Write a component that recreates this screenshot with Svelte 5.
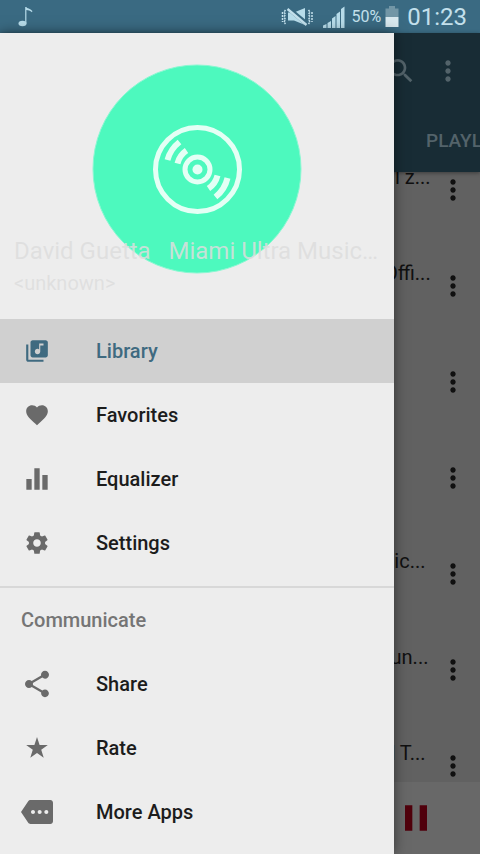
<script>
  const ICONS = {
    library: 'M20 2H8c-1.1 0-2 .9-2 2v12c0 1.1.9 2 2 2h12c1.1 0 2-.9 2-2V4c0-1.1-.9-2-2-2zm-2 5h-3v5.5c0 1.38-1.12 2.5-2.5 2.5S10 13.880 10 12.500s1.120-2.500 2.500-2.500c.57 0 1.080.19 1.500.51V5h4v2zM4 6H2v14c0 1.1.9 2 2 2h14v-2H4V6z',
    heart: 'M12 21.350l-1.450-1.320C5.400 15.360 2 12.280 2 8.500 2 5.420 4.420 3 7.500 3c1.740 0 3.410.81 4.500 2.090C13.090 3.810 14.760 3 16.500 3 19.580 3 22 5.420 22 8.500c0 3.780-3.400 6.860-8.550 11.540L12 21.350z',
    equalizer: 'M10 20h4V4h-4v16zm-6 0h4v-8H4v8zM16 9v11h4V9h-4z',
    settings: 'M19.430 12.980c.04-.32.07-.64.07-.98s-.03-.66-.07-.98l2.110-1.650c.19-.15.24-.42.12-.64l-2-3.460c-.12-.22-.39-.3-.61-.22l-2.490 1c-.52-.4-1.080-.73-1.690-.98l-.38-2.650C14.460 2.180 14.250 2 14 2h-4c-.25 0-.46.18-.49.42l-.38 2.650c-.61.25-1.170.59-1.690.98l-2.490-1c-.23-.09-.49 0-.61.22l-2 3.460c-.13.22-.07.49.12.64l2.110 1.650c-.04.32-.07.65-.07.98s.03.66.07.98l-2.110 1.650c-.19.15-.24.42-.12.64l2 3.460c.12.22.39.3.61.22l2.490-1c.52.4 1.080.73 1.690.98l.38 2.650c.03.24.24.42.49.42h4c.25 0 .46-.18.49-.42l.38-2.650c.61-.25 1.170-.59 1.690-.98l2.490 1c.23.09.49 0 .61-.22l2-3.460c.12-.22.07-.49-.12-.64l-2.110-1.650zM12 15.500c-1.930 0-3.500-1.570-3.500-3.500s1.570-3.500 3.500-3.500 3.500 1.570 3.500 3.500-1.570 3.500-3.500 3.500z',
    share: 'M18 16.080c-.76 0-1.440.3-1.960.77L8.910 12.700c.05-.23.09-.46.09-.7s-.04-.47-.09-.7l7.050-4.110c.54.5 1.250.81 2.040.81 1.660 0 3-1.340 3-3s-1.340-3-3-3-3 1.340-3 3c0 .24.04.47.09.7L8.040 9.810C7.500 9.310 6.790 9 6 9c-1.660 0-3 1.340-3 3s1.340 3 3 3c.79 0 1.500-.31 2.040-.81l7.120 4.160c-.05.21-.08.43-.08.65 0 1.610 1.310 2.920 2.920 2.920s2.920-1.310 2.920-2.920-1.310-2.920-2.920-2.920z',
    star: 'M12 1.800L14.400 9.200H22L15.900 13.700 18.200 20.900 12 16.500 5.800 20.900 8.100 13.700 2 9.200H9.600z',
    more: 'M22 3H7c-.69 0-1.230.35-1.590.88L0 12l5.410 8.110c.36.53.97.89 1.660.89H22c1.100 0 2-.9 2-2V5c0-1.100-.9-2-2-2zM9 13.500c-.83 0-1.500-.67-1.500-1.500s.67-1.500 1.500-1.500 1.500.67 1.500 1.500-.67 1.500-1.500 1.500zm5 0c-.83 0-1.500-.67-1.500-1.500s.67-1.500 1.500-1.500 1.500.67 1.500 1.500-.67 1.500-1.500 1.500zm5 0c-.83 0-1.500-.67-1.500-1.500s.67-1.500 1.500-1.500 1.500.67 1.500 1.500-.67 1.500-1.500 1.500z',
    dots: 'M12 8c1.100 0 2-.9 2-2s-.9-2-2-2-2 .9-2 2 .9 2 2 2zm0 2c-1.100 0-2 .9-2 2s.9 2 2 2 2-.9 2-2-.9-2-2-2zm0 6c-1.100 0-2 .9-2 2s.9 2 2 2 2-.9 2-2-.9-2-2-2z',
    search: 'M15.500 14h-.79l-.28-.27C15.410 12.590 16 11.110 16 9.500 16 5.910 13.090 3 9.500 3S3 5.910 3 9.500 5.910 16 9.500 16c1.610 0 3.090-.59 4.230-1.570l.27.28v.79l5 4.990L20.490 19l-4.990-5zm-6 0C7.010 14 5 11.990 5 9.500S7.010 5 9.500 5 14 7.010 14 9.500 11.990 14 9.500 14z',
    pause: 'M6 19h4V5H6v14zm8-14v14h4V5h-4z'
  };

  const library = [
    { label: 'Library', icon: 'library', active: true },
    { label: 'Favorites', icon: 'heart' },
    { label: 'Equalizer', icon: 'equalizer', large: true },
    { label: 'Settings', icon: 'settings' }
  ];
  const communicate = [
    { label: 'Share', icon: 'share', large: true },
    { label: 'Rate', icon: 'star' },
    { label: 'More Apps', icon: 'more', large: true }
  ];
  const songs = ['al z...', 'Offi...', '', '', 'sic...', 'tun...', 'd T...'];
</script>

{#snippet icon(name, large)}
  <svg class="icon" class:large viewBox="0 0 24 24" aria-hidden="true"><path fill-rule="evenodd" d={ICONS[name]} /></svg>
{/snippet}

{#snippet menu(items)}
  <ul class="menu">
    {#each items as item}
      <li>
        <a href="#{item.icon}" class:active={item.active}>
          <span class="slot">{@render icon(item.icon, item.large)}</span>
          {item.label}
        </a>
      </li>
    {/each}
  </ul>
{/snippet}

<div class="screen">
  <div class="status">
    <svg class="note" width="16" height="22" viewBox="0 0 16 22" aria-hidden="true">
      <ellipse cx="4.500" cy="17.500" rx="4" ry="2.800" />
      <path d="M7.200 1h1.200c.4 1.400 4 1.600 6 4l-.4 1.200c-1.800-1.600-4-2-5.600-2.200V17.500H7.200z" />
    </svg>
    <svg class="mute" width="32" height="20" viewBox="0 0 32 20" aria-hidden="true">
      <path d="M7 5.500h6L24 1v17l-11-4.500H7z" />
      <path d="M7.500 1.500L26 17" fill="none" stroke="#3a6a82" stroke-width="4.500" />
      <path d="M6.500 2L25.500 18" fill="none" stroke="#c3e0ec" stroke-width="2.400" />
      <path d="M4.500 3l-1.500 2 1.500 2.500L3 10l1.500 2.500L3 15l1.500 2M1.500 5v10M27.500 3L29 5l-1.500 2.500L29 10l-1.500 2.500L29 15l-1.500 2M31 5v10" fill="none" stroke="#c3e0ec" stroke-width="1.500" stroke-dasharray="2 1" />
    </svg>
    <svg class="signal" width="22" height="22" viewBox="0 0 22 22" aria-hidden="true">
      <path d="M0 19.500l3.500-1.500v4H0zM4.500 17l3.500-2v7H4.500zM9 12.500l3.500-2.500v12H9zM13.500 8l3.500-2.500V22h-3.500zM18 3l3.500-2.500V22H18z" />
    </svg>
    <span class="percent">50%</span>
    <svg class="battery" width="14" height="22" viewBox="0 0 14 22" aria-hidden="true">
      <path d="M4 0h6v2.500h3.500V11H.5V2.500H4z" fill="#7296a6" />
      <path d="M.5 11h13v10H.5z" />
    </svg>
    <span class="clock">01:23</span>
  </div>

  <div class="stage">
    <div class="player">
      <header>
        <div class="toolbar">
          <button aria-label="Search">{@render icon('search', true)}</button>
          <button aria-label="Menu">{@render icon('dots', true)}</button>
        </div>
        <div class="tabs"><a href="#playlists">PLAYLISTS</a></div>
      </header>
      <div class="list">
        <ul>
          {#each songs as song}
            <li>
              <span>{song}</span>
              <button aria-label="Song options">{@render icon('dots', true)}</button>
            </li>
          {/each}
        </ul>
      </div>
      <footer>
        <button aria-label="Pause">{@render icon('pause')}</button>
      </footer>
    </div>

    <aside>
      <div class="now">
        <svg class="cover" viewBox="0 0 210 210" aria-hidden="true">
          <circle cx="105" cy="105" r="104" fill="#4df9be" stroke="#8af8d2" stroke-width="1" />
          <g fill="none" stroke="#e4fff5" stroke-width="5">
            <circle cx="105.500" cy="105.500" r="42" />
            <circle cx="105.500" cy="105.500" r="12.500" />
            <g stroke-width="6">
              <path d="M87.500 78A34 34 0 0 0 75.500 96" />
              <path d="M94.500 86.500A22 22 0 0 0 85.500 99.500" />
              <path d="M123.500 133A34 34 0 0 0 135.500 114" />
              <path d="M116.500 124.500A22 22 0 0 0 125.500 111.500" />
            </g>
          </g>
          <circle cx="105.500" cy="105.500" r="5" fill="#e4fff5" />
        </svg>
        <div class="track">
          <div class="title">David Guetta   Miami Ultra Music…</div>
          <div class="artist">&lt;unknown&gt;</div>
        </div>
      </div>
      <nav>
        {@render menu(library)}
        <h2>Communicate</h2>
        {@render menu(communicate)}
      </nav>
    </aside>
  </div>
</div>

<style>
  :global(body) { margin: 0; }
  .screen {
    display: flex;
    flex-direction: column;
    height: 100vh;
    overflow: hidden;
    font-family: Roboto, sans-serif;
  }
  ul { list-style: none; margin: 0; padding: 0; }
  a { color: inherit; text-decoration: none; }
  button {
    display: flex;
    padding: 0;
    border: 0;
    background: none;
    color: inherit;
  }
  .icon { display: block; width: 26px; height: 26px; fill: currentColor; }
  .icon.large { width: 32px; height: 32px; }

  .status {
    display: flex;
    align-items: center;
    flex: none;
    height: 33px;
    padding: 0 13px 0 18px;
    background: #3a6a82;
    color: #c3e0ec;
    fill: #b7dcea;
  }
  .status svg { flex: none; }
  .mute { margin-left: auto; }
  .signal { margin: 0 7px 0 10px; }
  .percent { font-size: 16px; }
  .battery { margin: 0 8px 0 4px; fill: #d8e8ee; }
  .clock { font-size: 24px; }

  .stage { position: relative; flex: 1; min-height: 0; }
  .player {
    display: flex;
    flex-direction: column;
    height: 100%;
    background: #616161;
  }
  header {
    z-index: 1;
    flex: none;
    background: #182c35;
    color: #53636a;
    box-shadow: 0 1px 4px rgba(0, 0, 0, 0.4);
  }
  .toolbar {
    display: flex;
    justify-content: flex-end;
    align-items: center;
    gap: 15px;
    height: 76px;
    padding-right: 16px;
  }
  .tabs {
    display: flex;
    justify-content: flex-end;
    align-items: center;
    height: 63px;
    overflow: hidden;
    font-size: 19px;
    font-weight: 500;
    line-height: 24px;
  }
  .tabs a { width: 54px; white-space: nowrap; }
  .list { flex: 1; min-height: 0; overflow: hidden; }
  .list ul { margin-top: -30px; }
  .list li {
    display: flex;
    justify-content: flex-end;
    align-items: center;
    height: 96px;
    padding-right: 11px;
    color: #101010;
  }
  .list span {
    width: 53px;
    padding-bottom: 26px;
    font-size: 20px;
    line-height: 24px;
    white-space: nowrap;
  }
  footer {
    display: flex;
    justify-content: flex-end;
    align-items: center;
    flex: none;
    height: 72px;
    padding-right: 42px;
    background: #686868;
    color: #50000c;
  }
  footer .icon { width: 44px; height: 44px; }

  aside {
    position: absolute;
    inset: 0 86px 0 0;
    z-index: 2;
    overflow: hidden;
    background: #ededed;
    box-shadow: 0 0 12px rgba(0, 0, 0, 0.5);
  }
  .now { display: grid; height: 286px; }
  .cover {
    grid-area: 1 / 1;
    justify-self: center;
    width: 210px;
    height: 210px;
    margin-top: 31px;
  }
  .track {
    grid-area: 1 / 1;
    align-self: end;
    z-index: 1;
    padding: 0 14px 20px;
    color: rgba(221, 221, 221, 0.85);
    line-height: 32px;
  }
  .title { font-size: 24px; white-space: pre; }
  .artist { font-size: 20px; }
  .menu a {
    display: flex;
    align-items: center;
    gap: 43px;
    height: 64px;
    padding-left: 21px;
    color: #1c1c1c;
    font-size: 20px;
    font-weight: 500;
  }
  .slot {
    display: flex;
    justify-content: center;
    width: 32px;
    color: #6a6a6a;
  }
  .menu a.active { background: #d0d0d0; }
  .menu a.active, .active .slot { color: #3f6a80; }
  h2 {
    margin: 11px 0 0;
    padding-left: 21px;
    border-top: 2px solid #d8d8d8;
    color: #757575;
    font-size: 20px;
    font-weight: 500;
    line-height: 64px;
  }
</style>
